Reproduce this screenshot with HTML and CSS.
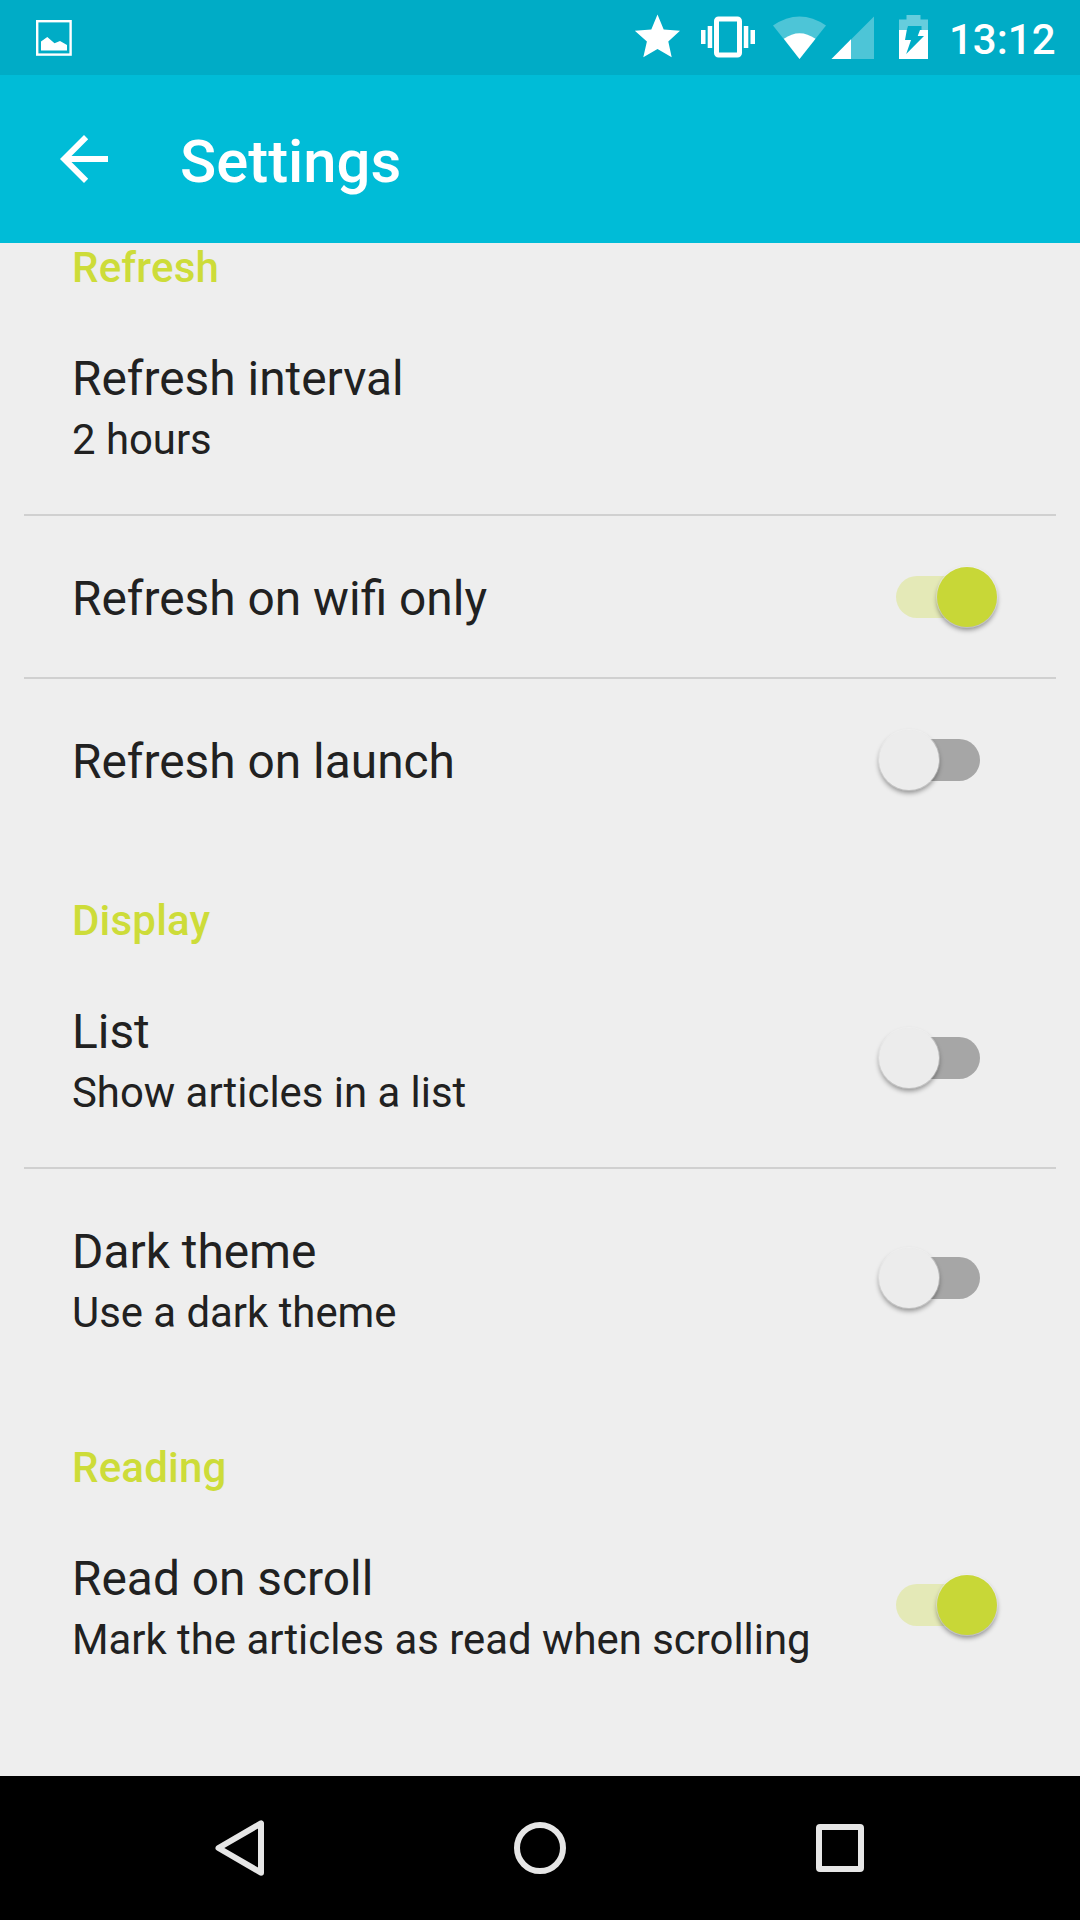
FILE: index.html
```html
<!DOCTYPE html>
<html lang="en">
<head>
<meta charset="utf-8">
<title>Settings</title>
<link rel="stylesheet" href="styles.css">
</head>
<body>
<div class="screen">
  <header class="status-bar">
    <svg class="status-icons" width="940" height="75" viewBox="0 0 940 75" aria-hidden="true">
      <rect x="37.2" y="21.2" width="33.4" height="33.4" fill="none" stroke="#fff" stroke-width="2.4"/>
      <path fill="#fff" d="M41 50.500V41.500L47.300 37L54.500 43.300L60 41L67 45V50.500Z"/>
      <path fill="#fff" d="M657.500 14.500L663.700 29.500L680 30.800L668.300 41.500L671.700 57.200L657.500 49L643.300 57.200L646.900 41.500L634.800 30.800L651.300 29.500Z"/>
      <rect x="716.500" y="19" width="23" height="36" rx="2" fill="none" stroke="#fff" stroke-width="5"/>
      <path fill="#fff" d="M701 30h4.500v14H701zM707.700 26h4.500v22h-4.500zM743.800 26h4.500v22h-4.500zM750.500 30h4.500v14h-4.500z"/>
      <path fill="#fff" fill-opacity=".3" d="M799.500 59L773 25.500Q799.500 7.500 826 25.500Z"/>
      <path fill="#fff" d="M799.500 59L783.800 38.800Q799.500 27.500 815.500 38.800Z"/>
      <path fill="#fff" fill-opacity=".3" d="M831.500 59L874 16.500V59Z"/>
      <path fill="#fff" d="M831.500 59L851 39.200V59Z"/>
      <path fill="#fff" fill-opacity=".4" d="M899 30V19.500H906.500V15H920.500V19.500H928V30H921.500V26H908L906.800 30Z"/>
      <path fill="#fff" fill-rule="evenodd" d="M899 30H928V59H899ZM906.800 30L905 40H911L906.200 54L924 36H917.700L920 30Z"/>
    </svg>
    <span class="clock">13:12</span>
  </header>

  <div class="app-bar">
    <svg class="back" width="48" height="48" viewBox="0 0 48 48" aria-hidden="true">
      <path fill="#fff" d="M48 21H11.500L28.200 4.200L24 0L0 24L24 48L28.200 43.800L11.500 27H48Z"/>
    </svg>
    <h1 class="title">Settings</h1>
  </div>

  <main class="list">
    <h2 class="category first">Refresh</h2>
    <section class="group">
      <div class="row tall">
        <div class="label"><div class="name">Refresh interval</div><div class="summary">2 hours</div></div>
      </div>
      <div class="row">
        <div class="label"><div class="name">Refresh on wifi only</div></div>
        <div class="switch on"><div class="thumb"></div></div>
      </div>
      <div class="row">
        <div class="label"><div class="name">Refresh on launch</div></div>
        <div class="switch"><div class="thumb"></div></div>
      </div>
    </section>
    <h2 class="category">Display</h2>
    <section class="group">
      <div class="row tall">
        <div class="label"><div class="name">List</div><div class="summary">Show articles in a list</div></div>
        <div class="switch"><div class="thumb"></div></div>
      </div>
      <div class="row tall">
        <div class="label"><div class="name">Dark theme</div><div class="summary">Use a dark theme</div></div>
        <div class="switch"><div class="thumb"></div></div>
      </div>
    </section>
    <h2 class="category">Reading</h2>
    <section class="group">
      <div class="row tall">
        <div class="label"><div class="name">Read on scroll</div><div class="summary">Mark the articles as read when scrolling</div></div>
        <div class="switch on"><div class="thumb"></div></div>
      </div>
    </section>
  </main>

  <nav class="nav-bar">
    <svg width="60" height="60" viewBox="0 0 60 60" aria-hidden="true"><path d="M51 5.300V54.700L8.500 30Z" class="key"/></svg>
    <svg width="60" height="60" viewBox="0 0 60 60" aria-hidden="true"><circle cx="30" cy="30" r="23" class="key"/></svg>
    <svg width="60" height="60" viewBox="0 0 60 60" aria-hidden="true"><path fill="#e6e6e6" fill-rule="evenodd" d="M10 6H50Q54 6 54 10V50Q54 54 50 54H10Q6 54 6 50V10Q6 6 10 6ZM12 12V48H48V12Z"/></svg>
  </nav>
</div>
</body>
</html>
```

FILE: styles.css
```css
* {
  box-sizing: border-box;
  margin: 0;
}

body {
  font-family: Roboto, sans-serif;
  background: #eee;
  color: #212121;
}

.screen {
  width: 1080px;
  height: 1920px;
  display: flex;
  flex-direction: column;
  overflow: hidden;
}

.status-bar {
  height: 75px;
  flex: none;
  display: flex;
  background: #00acc6;
}

.status-icons {
  flex: none;
}

.clock {
  margin-left: 9px;
  color: #fff;
  font-size: 42px;
  font-weight: 500;
  line-height: 80px;
}

.app-bar {
  height: 168px;
  flex: none;
  display: flex;
  align-items: center;
  padding-left: 60px;
  background: #00bcd7;
}

.back {
  flex: none;
}

.title {
  margin-left: 72px;
  padding-top: 6px;
  color: #fff;
  font-size: 59.8px;
  font-weight: 500;
  line-height: 70px;
}

.list {
  flex: 1;
  min-height: 0;
  overflow: hidden;
}

.category {
  height: 109px;
  padding: 56px 72px 0;
  color: #cddc39;
  font-size: 42px;
  font-weight: 500;
  line-height: 49px;
  letter-spacing: .2px;
}

.category.first {
  height: 53px;
  padding-top: 0;
}

.row {
  display: flex;
  align-items: center;
  justify-content: space-between;
  height: 161px;
  margin: 0 24px;
  padding: 0 56px 0 48px;
}

.row.tall {
  height: 218px;
}

.row + .row {
  height: 163px;
  border-top: 2px solid #d0d0d0;
}

.row.tall + .row.tall {
  height: 220px;
}

.name {
  padding-top: 4px;
  font-size: 47.85px;
  line-height: 56px;
}

.tall .name {
  padding-top: 5px;
}

.summary {
  padding-top: 8px;
  font-size: 41.86px;
  line-height: 49px;
}

.switch {
  flex: none;
  display: flex;
  align-items: center;
  width: 84px;
  height: 42px;
  margin-right: 20px;
  border-radius: 21px;
  background: #a6a6a6;
}

.switch.on {
  justify-content: flex-end;
  background: #e4e9b7;
}

.thumb {
  flex: none;
  width: 60px;
  height: 60px;
  margin: 0 -17.5px;
  border-radius: 50%;
  background: #ececec;
  box-shadow: 0 0 0 1px rgba(255, 255, 255, .35), 0 3px 5px rgba(0, 0, 0, .4);
}

.on .thumb {
  margin: 0 -17px;
  background: #c8d737;
}

.nav-bar {
  height: 144px;
  flex: none;
  display: flex;
  align-items: center;
  justify-content: center;
  gap: 240px;
  background: #000;
}

.key {
  fill: none;
  stroke: #e6e6e6;
  stroke-width: 6;
  stroke-linejoin: round;
}
```
